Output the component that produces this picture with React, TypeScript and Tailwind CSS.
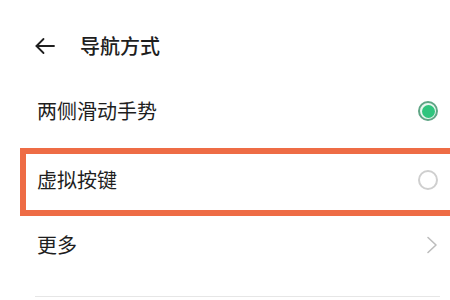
import React from 'react';

const font = { fontFamily: '"Noto Sans CJK SC", "Noto Sans", sans-serif' };

function BackArrow() {
  return (
    <svg width="22" height="20" viewBox="0 0 22 20" fill="none" stroke="#1f1f1f" strokeWidth="1.8" strokeLinecap="round" strokeLinejoin="round">
      <path d="M20 10H2.5" />
      <path d="M9.5 3L2.5 10l7 7" />
    </svg>
  );
}

function Radio({ checked }: { checked: boolean }) {
  if (checked) {
    return (
      <div className="w-[20px] h-[20px] rounded-full border-2 border-[#5fa585] flex items-center justify-center bg-[#e8f7ef]">
        <div className="w-[13px] h-[13px] rounded-full bg-[#2fc47d]" />
      </div>
    );
  }
  return <div className="w-[20px] h-[20px] rounded-full border-2 border-[#cfcfcf]" />;
}

function Chevron() {
  return (
    <svg width="12" height="18" viewBox="0 0 12 18" fill="none" stroke="#bdbdbd" strokeWidth="1.6" strokeLinecap="round" strokeLinejoin="round">
      <path d="M2 1.5L10 9l-8 7.5" />
    </svg>
  );
}

export default function App() {
  return (
    <div className="w-[450px] h-[300px] bg-white overflow-hidden text-[#1e1e1e]" style={font}>
      {/* Header */}
      <header className="h-[92px] flex items-center pl-[34px]">
        <BackArrow />
        <h1 className="ml-[24px] text-[20px] font-medium leading-none">导航方式</h1>
      </header>

      {/* 两侧滑动手势 */}
      <div className="h-[38px] flex items-center justify-between pl-[37px] pr-[12px]">
        <span className="text-[20px] leading-none">两侧滑动手势</span>
        <Radio checked />
      </div>

      {/* 虚拟按键 (highlighted) */}
      <div className="mt-[18px] ml-[20px] w-[440px] h-[68px] border-[6px] border-[#ee6c45] flex items-center justify-between pl-[11px] pr-[16px] pb-[4px]">
        <span className="text-[20px] leading-none">虚拟按键</span>
        <Radio checked={false} />
      </div>

      {/* 更多 */}
      <div className="h-[58px] flex items-center justify-between pl-[37px] pr-[12px]">
        <span className="text-[20px] leading-none">更多</span>
        <Chevron />
      </div>

      <div className="mt-[22px] ml-[35px] w-[405px] h-px bg-[#e6e6e6]" />
    </div>
  );
}
